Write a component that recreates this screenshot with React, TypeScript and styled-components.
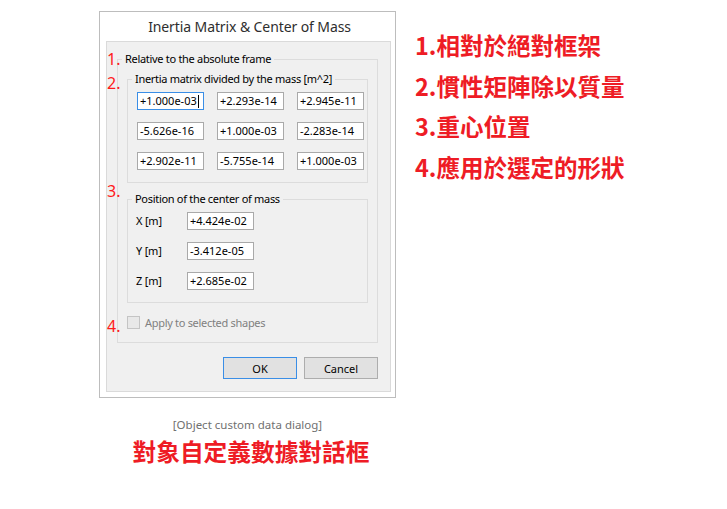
import React from "react";
import styled, { createGlobalStyle } from "styled-components";

const Global = createGlobalStyle`
  html, body { margin: 0; padding: 0; background: #ffffff; }
  body { font-family: "Noto Sans", "Open Sans", sans-serif; }
  * { box-sizing: border-box; }
`;

const Page = styled.div`
  display: flex;
  align-items: flex-start;
  width: 727px;
  height: 509px;
  padding: 11px 0 0 99px;
`;

const LeftCol = styled.div`
  display: flex;
  flex-direction: column;
  align-items: center;
  width: 297px;
`;

const Dialog = styled.div`
  width: 297px;
  border: 1px solid #bdbdbd;
  background: #ffffff;
  padding: 0 4px 5px 6px;
`;

const TitleBar = styled.div`
  height: 29px;
  line-height: 29px;
  text-align: center;
  font-family: "Noto Sans", sans-serif;
  font-size: 14px;
  letter-spacing: -0.1px;
  color: #2e2e2e;
  padding-left: 2px;
`;

const Panel = styled.div`
  position: relative;
  border: 1px solid #dadada;
  background: #f0f0f0;
  padding: 10px 12px 12px 10px;
  font-family: "Noto Sans", sans-serif;
  font-size: 11px;
  color: #000;
`;

const Mark = styled.span<{ $top: number }>`
  position: absolute;
  left: 0;
  top: ${(p) => p.$top}px;
  font-family: "Noto Sans", sans-serif;
  font-size: 16px;
  line-height: 16px;
  color: #ff1a1a;
`;

const GroupBox = styled.fieldset<{ $mt?: number }>`
  margin: ${(p) => p.$mt ?? 0}px 0 0 0;
  padding: 0;
  min-width: 0;
  border: 1px solid #dcdcdc;
`;

const Legend = styled.legend`
  margin-left: 4px;
  padding: 0 3px;
  font-size: 11px;
  letter-spacing: -0.3px;
  line-height: 14px;
  color: #000;
`;

const GroupBody = styled.div<{ $pad: string }>`
  padding: ${(p) => p.$pad};
`;

const MatrixGrid = styled.div`
  display: grid;
  grid-template-columns: repeat(3, 67px);
  column-gap: 13px;
  row-gap: 12px;
`;

const PosGrid = styled.div`
  display: grid;
  grid-template-columns: 51px 67px;
  row-gap: 12px;
  align-items: center;
`;

const Field = styled.div<{ $focus?: boolean }>`
  height: 18px;
  border: 1px solid ${(p) => (p.$focus ? "#3a8ee6" : "#a9a9a9")};
  background: #ffffff;
  padding-left: 2px;
  font-size: 11px;
  line-height: 16px;
  white-space: nowrap;
  display: flex;
  align-items: center;
`;

const Caret = styled.span`
  display: inline-block;
  width: 1px;
  height: 13px;
  background: #000;
  margin-left: 1px;
`;

const Label = styled.div`
  font-size: 11px;
  letter-spacing: -0.2px;
  line-height: 16px;
`;

const CheckRow = styled.div`
  display: flex;
  align-items: center;
  gap: 5px;
  margin-top: 13px;
  height: 13px;
`;

const CheckBox = styled.span`
  width: 13px;
  height: 13px;
  border: 1px solid #c4c4c4;
  background: #e8e8e8;
`;

const CheckLabel = styled.span`
  color: #808080;
  font-size: 11px;
  letter-spacing: -0.3px;
  line-height: 13px;
`;

const ButtonRow = styled.div`
  display: flex;
  justify-content: flex-end;
  gap: 7px;
  margin-top: 14px;
`;

const Button = styled.div<{ $default?: boolean }>`
  width: 74px;
  height: 22px;
  border: 1px solid ${(p) => (p.$default ? "#3a8ee6" : "#adadad")};
  background: #e1e1e1;
  display: flex;
  align-items: center;
  justify-content: center;
  font-size: 11px;
  color: #000;
`;

const Caption = styled.div`
  margin-top: 19px;
  font-family: "Noto Sans", sans-serif;
  font-size: 11.5px;
  line-height: 16px;
  color: #707070;
`;

const CaptionZh = styled.div`
  margin-top: 3px;
  padding-left: 7px;
  font-family: "Noto Sans CJK TC", sans-serif;
  font-weight: 700;
  font-size: 23.7px;
  line-height: 30px;
  color: #ee1c25;
`;

const NoteList = styled.div`
  margin-left: 19px;
  padding-top: 14px;
  display: flex;
  flex-direction: column;
`;

const Note = styled.div`
  font-family: "Noto Sans CJK TC", sans-serif;
  font-weight: 700;
  font-size: 23.5px;
  line-height: 40.5px;
  color: #ee1c25;
  white-space: nowrap;
`;

const matrix = [
  "+1.000e-03",
  "+2.293e-14",
  "+2.945e-11",
  "-5.626e-16",
  "+1.000e-03",
  "-2.283e-14",
  "+2.902e-11",
  "-5.755e-14",
  "+1.000e-03",
];

const position = [
  ["X [m]", "+4.424e-02"],
  ["Y [m]", "-3.412e-05"],
  ["Z [m]", "+2.685e-02"],
];

const notes = [
  "1.相對於絕對框架",
  "2.慣性矩陣除以質量",
  "3.重心位置",
  "4.應用於選定的形狀",
];

export default function App() {
  return (
    <>
      <Global />
      <Page>
        <LeftCol>
          <Dialog>
            <TitleBar>Inertia Matrix &amp; Center of Mass</TitleBar>
            <Panel>
              <Mark $top={9}>1.</Mark>
              <Mark $top={33}>2.</Mark>
              <Mark $top={141}>3.</Mark>
              <Mark $top={276}>4.</Mark>
              <GroupBox>
                <Legend>Relative to the absolute frame</Legend>
                <GroupBody $pad="6px 9px 13px 9px">
                  <GroupBox>
                    <Legend>Inertia matrix divided by the mass [m^2]</Legend>
                    <GroupBody $pad="6px 3px 12px 9px">
                      <MatrixGrid>
                        {matrix.map((v, i) => (
                          <Field key={i} $focus={i === 0}>
                            {v}
                            {i === 0 && <Caret />}
                          </Field>
                        ))}
                      </MatrixGrid>
                    </GroupBody>
                  </GroupBox>
                  <GroupBox $mt={9}>
                    <Legend>Position of the center of mass</Legend>
                    <GroupBody $pad="6px 3px 12px 8px">
                      <PosGrid>
                        {position.map(([l, v]) => (
                          <React.Fragment key={l}>
                            <Label>{l}</Label>
                            <Field>{v}</Field>
                          </React.Fragment>
                        ))}
                      </PosGrid>
                    </GroupBody>
                  </GroupBox>
                  <CheckRow>
                    <CheckBox />
                    <CheckLabel>Apply to selected shapes</CheckLabel>
                  </CheckRow>
                </GroupBody>
              </GroupBox>
              <ButtonRow>
                <Button $default>OK</Button>
                <Button>Cancel</Button>
              </ButtonRow>
            </Panel>
          </Dialog>
          <Caption>[Object custom data dialog]</Caption>
          <CaptionZh>對象自定義數據對話框</CaptionZh>
        </LeftCol>
        <NoteList>
          {notes.map((n) => (
            <Note key={n}>{n}</Note>
          ))}
        </NoteList>
      </Page>
    </>
  );
}
